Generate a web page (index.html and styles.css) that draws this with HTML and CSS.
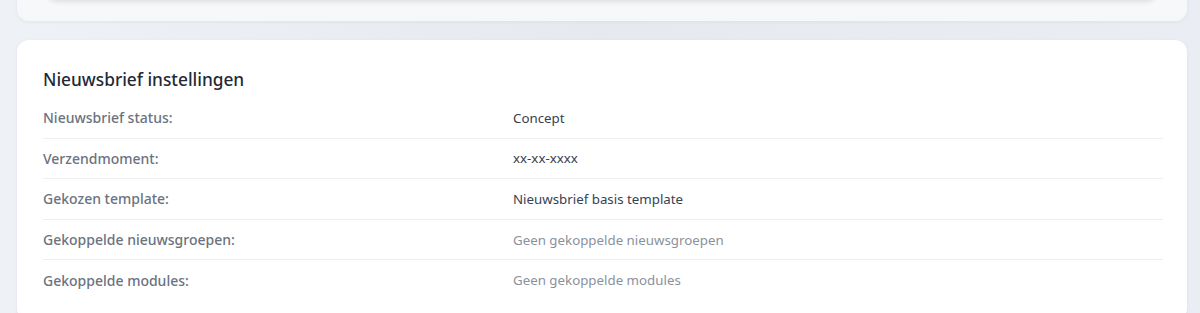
FILE: index.html
```html
<!DOCTYPE html>
<html>

<head>
    <meta charset="utf-8">
    <link rel="stylesheet" href="styles.css">
</head>

<body>
    <div class="page">
        <div class="card card_prev">
            <div class="card_prev_inner"></div>
        </div>

        <div class="card">
            <h2 class="card_title">Nieuwsbrief instellingen</h2>
            <div class="settings">
                <div class="setting_row">
                    <div class="setting_label">Nieuwsbrief status:</div>
                    <div class="setting_value">Concept</div>
                </div>
                <div class="setting_row">
                    <div class="setting_label">Verzendmoment:</div>
                    <div class="setting_value">xx-xx-xxxx</div>
                </div>
                <div class="setting_row">
                    <div class="setting_label">Gekozen template:</div>
                    <div class="setting_value">Nieuwsbrief basis template</div>
                </div>
                <div class="setting_row">
                    <div class="setting_label">Gekoppelde nieuwsgroepen:</div>
                    <div class="setting_value empty">Geen gekoppelde nieuwsgroepen</div>
                </div>
                <div class="setting_row">
                    <div class="setting_label">Gekoppelde modules:</div>
                    <div class="setting_value empty">Geen gekoppelde modules</div>
                </div>
            </div>
        </div>
    </div>
</body>

</html>
```

FILE: styles.css
```css
html,
body {
    margin: 0;
    height: 100%;
    overflow: hidden;
}

body {
    background: linear-gradient(90deg, #eef1f6 0%, #e6eaf0 50%, #eaeef4 100%);
    font-family: 'Noto Sans', 'Segoe UI', sans-serif;
}

.page {
    padding: 0 13px 0 17px;
    margin-top: -40px;
}

.card {
    background-color: #fff;
    border-radius: 12px;
    box-shadow: 0 1px 4px rgba(30, 41, 59, 0.06);
    padding: 24px 24px 20px 26px;
    margin-bottom: 19px;
}

/* the bottom part of the card above, cut off by the window */

.card_prev {
    height: 61px;
    padding: 0 30px;
    background: linear-gradient(180deg, #fbfbfc 0%, #f6f7f9 100%);
}

.card_prev_inner {
    height: 40px;
    background-color: #fff;
    border-radius: 0 0 10px 10px;
    box-shadow: 0 2px 5px rgba(30, 41, 59, 0.12);
}

.card_title {
    margin: 0 0 2px 0;
    font-size: 17.3px;
    font-weight: 500;
    color: #1f2937;
    line-height: 32px;
}

.setting_row {
    display: grid;
    grid-template-columns: 470px 1fr;
    align-items: center;
    height: 39.6px;
    border-bottom: 1px solid #eceef1;
    font-size: 14px;
}

.setting_row:last-child {
    border-bottom: none;
}

.setting_label {
    color: #6b7280;
    font-weight: 500;
}

.setting_value {
    color: #374151;
    font-size: 13.3px;
}

.setting_value.empty {
    color: #8b919b;
}
```
